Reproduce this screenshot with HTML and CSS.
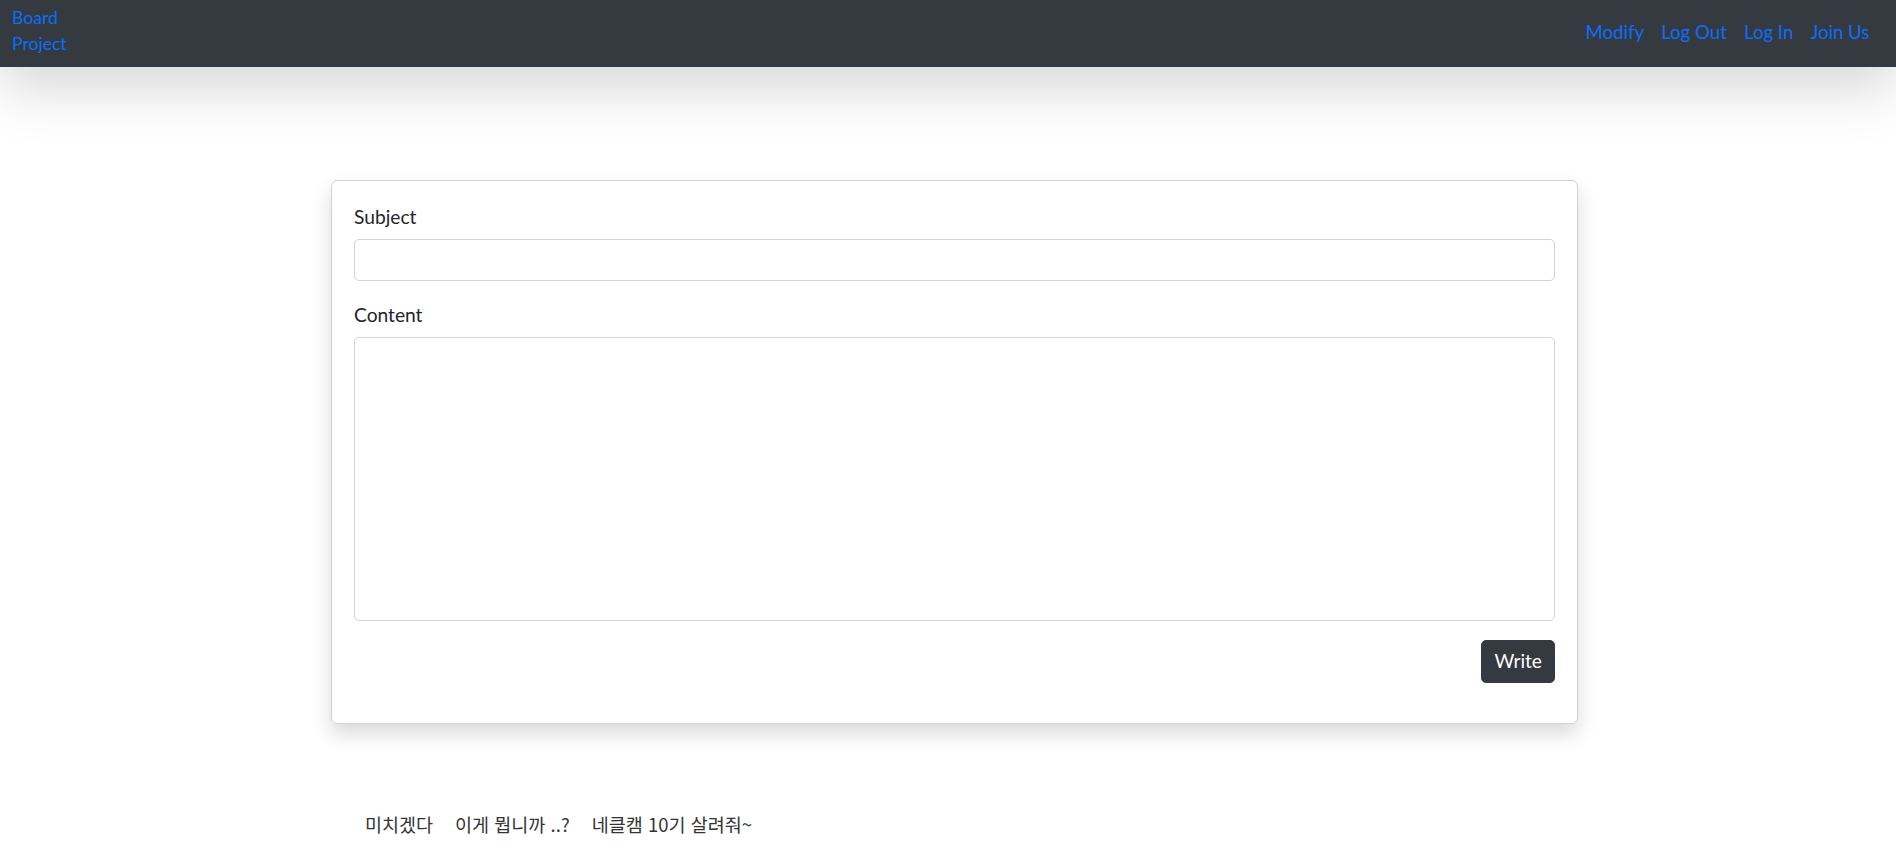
FILE: index.html
```html
<!DOCTYPE html>
<html lang="ko">
<head>
<meta charset="utf-8">
<title>Board Project</title>
<link rel="stylesheet" href="styles.css">
</head>
<body>
<nav class="navbar">
  <a class="brand" href="#">Board Project</a>
  <ul class="nav-links">
    <li><a href="#">Modify</a></li>
    <li><a href="#">Log Out</a></li>
    <li><a href="#">Log In</a></li>
    <li><a href="#">Join Us</a></li>
  </ul>
</nav>
<main class="main">
  <form class="card">
    <label class="label" for="subject">Subject</label>
    <input class="control" id="subject" type="text">
    <label class="label label-gap" for="content">Content</label>
    <textarea class="control area" id="content"></textarea>
    <div class="actions">
      <button class="btn" type="button">Write</button>
    </div>
  </form>
  <ul class="footer-list">
    <li>미치겠다</li>
    <li>이게 뭡니까 ..?</li>
    <li>네클캠 10기 살려줘~</li>
  </ul>
</main>
</body>
</html>
```
FILE: styles.css
```css
* { box-sizing: border-box; }
html, body { margin: 0; padding: 0; }
body {
  font-family: "Lato", "Noto Sans CJK KR", sans-serif;
  font-size: 19.2px;
  line-height: 1.5;
  color: #212529;
  background: #fff;
}
a { color: #0d6efd; text-decoration: none; }

.navbar {
  height: 67px;
  background: #343a40;
  display: flex;
  align-items: center;
  justify-content: space-between;
  padding: 0 18px 0 12px;
  box-shadow: 0 19px 58px rgba(0, 0, 0, 0.175);
  position: relative;
  z-index: 1;
}
.brand {
  width: 60px;
  font-size: 17.6px;
  line-height: 26px;
  align-self: flex-start;
  margin-top: 5px;
}
.nav-links {
  list-style: none;
  margin: 0;
  padding: 0;
  display: flex;
  margin-top: -2px;
  font-size: 18.6px;
}
.nav-links a {
  display: block;
  padding: 8px 8.6px;
}

.main {
  padding: 113px 0 0 331px;
}
.card {
  width: 1247px;
  border: 1px solid rgba(0, 0, 0, 0.175);
  border-radius: 6px;
  box-shadow: 0 10px 20px rgba(0, 0, 0, 0.15);
  padding: 22px 22px 40px;
  display: flex;
  flex-direction: column;
}
.label {
  display: block;
  margin-bottom: 7px;
}
.label-gap { margin-top: 20px; }
.control {
  display: block;
  width: 100%;
  height: 42px;
  border: 1px solid #ced4da;
  border-radius: 5px;
  font: inherit;
  padding: 6px 14px;
  background: #fff;
}
.area {
  height: 284px;
  resize: none;
}
.actions {
  display: flex;
  justify-content: flex-end;
  margin-top: 19px;
}
.btn {
  background: #343a40;
  color: #fff;
  border: 1px solid #343a40;
  border-radius: 5px;
  font: inherit;
  height: 43px;
  padding: 0 12px;
}
.footer-list {
  list-style: none;
  margin: 87px 0 0 34px;
  padding: 0;
  display: flex;
  gap: 22px;
  font-size: 18.5px;
  color: #333;
  font-family: "Noto Sans CJK KR", sans-serif;
}
```
